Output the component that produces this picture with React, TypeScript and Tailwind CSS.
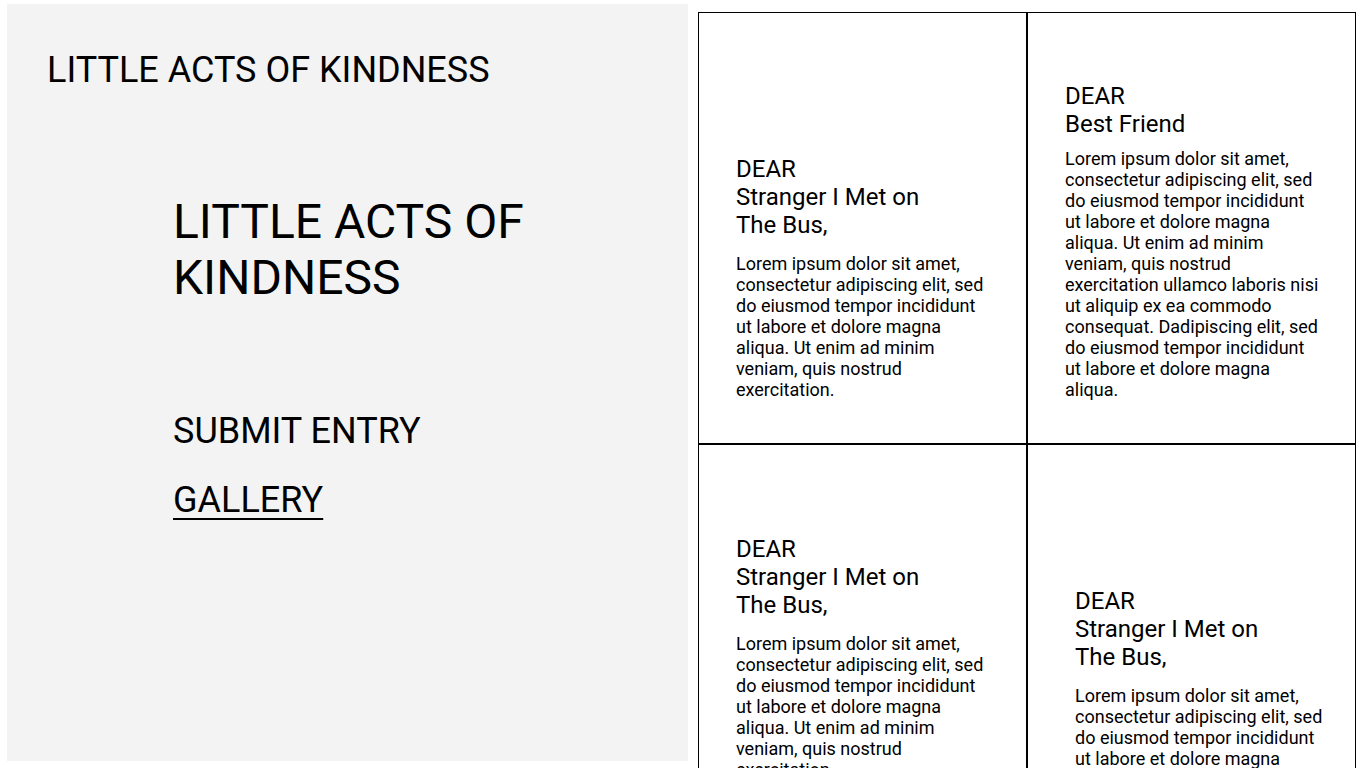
import React from 'react';

interface Letter {
  to: string;
  body: string;
  pt: string;
  pl: string;
  gap: string;
}

const shortBody =
  'Lorem ipsum dolor sit amet, consectetur adipiscing elit, sed do eiusmod tempor incididunt ut labore et dolore magna aliqua. Ut enim ad minim veniam, quis nostrud exercitation.';

const longBody =
  'Lorem ipsum dolor sit amet, consectetur adipiscing elit, sed do eiusmod tempor incididunt ut labore et dolore magna aliqua. Ut enim ad minim veniam, quis nostrud exercitation ullamco laboris nisi ut aliquip ex ea commodo consequat. Dadipiscing elit, sed do eiusmod tempor incididunt ut labore et dolore magna aliqua.';

const letters: Letter[] = [
  { to: 'Stranger I Met on The Bus,', body: shortBody, pt: 'pt-[142px]', pl: 'pl-[37px]', gap: 'mt-[14px]' },
  { to: 'Best Friend', body: longBody, pt: 'pt-[69px]', pl: 'pl-[37px]', gap: 'mt-[10px]' },
  { to: 'Stranger I Met on The Bus,', body: shortBody, pt: 'pt-[90px]', pl: 'pl-[37px]', gap: 'mt-[14px]' },
  { to: 'Stranger I Met on The Bus,', body: shortBody, pt: 'pt-[142px]', pl: 'pl-[47px]', gap: 'mt-[14px]' },
];

function LetterCard({ letter }: { letter: Letter }) {
  return (
    <div className={`border border-black h-[432px] ${letter.pt} ${letter.pl}`}>
      <div className="text-[24px] leading-[28px] max-w-[200px]">
        <div>DEAR</div>
        <div>{letter.to}</div>
      </div>
      <p className={`${letter.gap} max-w-[255px] text-[18px] leading-[21px]`}>{letter.body}</p>
    </div>
  );
}

export default function App() {
  return (
    <div
      className="flex gap-[10px] pl-[7px] pt-[4px] bg-white text-black"
      style={{ fontFamily: 'Roboto, "Liberation Sans", sans-serif' }}
    >
      <aside className="w-[681px] h-[757px] shrink-0 bg-[#f3f3f3] pl-[40px] pt-[46px]">
        <h1 className="text-[36px] leading-[40px]">LITTLE ACTS OF KINDNESS</h1>
        <div className="pl-[126px] pt-[104px]">
          <h2 className="text-[48px] leading-[56px] max-w-[390px]">LITTLE ACTS OF KINDNESS</h2>
          <nav className="mt-[104px] flex flex-col gap-[27px] text-[36px] leading-[42px]">
            <a className="w-fit">SUBMIT ENTRY</a>
            <a className="w-fit underline underline-offset-[6px] decoration-[2px]">GALLERY</a>
          </nav>
        </div>
      </aside>
      <main className="mt-[8px] w-[658px] grid grid-cols-2">
        {letters.map((l, i) => (
          <LetterCard key={i} letter={l} />
        ))}
      </main>
    </div>
  );
}
